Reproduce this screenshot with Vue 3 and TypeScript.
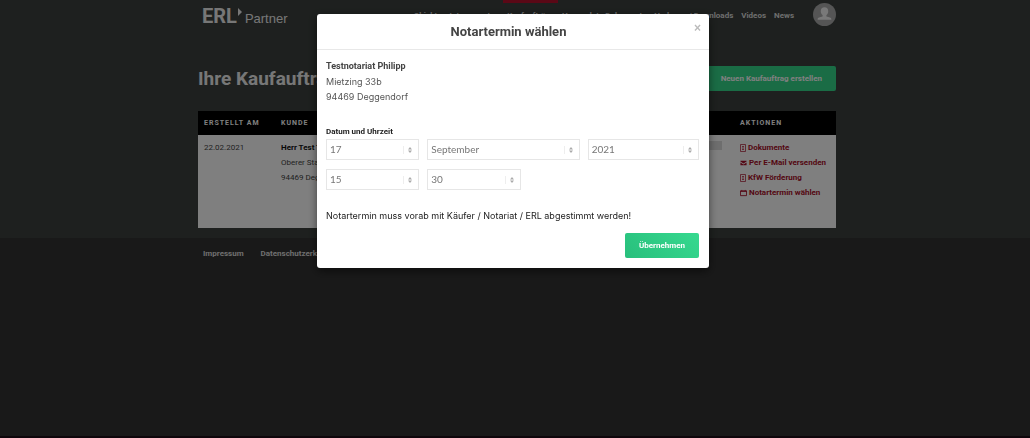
<script setup lang="ts">
import { reactive } from 'vue'

interface NavItem {
  label: string
  active?: boolean
}

interface Action {
  label: string
  icon: 'doc' | 'mail' | 'calendar'
}

const nav: NavItem[] = [
  { label: 'Objekte' },
  { label: 'Interessenten' },
  { label: 'Kaufaufträge', active: true },
  { label: 'Versendete Dokumente' },
  { label: 'Vorlagen / Downloads' },
  { label: 'Videos' },
  { label: 'News' },
]

const actions: Action[] = [
  { label: 'Dokumente', icon: 'doc' },
  { label: 'Per E-Mail versenden', icon: 'mail' },
  { label: 'KfW Förderung', icon: 'doc' },
  { label: 'Notartermin wählen', icon: 'calendar' },
]

const months: string[] = [
  'Januar', 'Februar', 'März', 'April', 'Mai', 'Juni', 'Juli',
  'August', 'September', 'Oktober', 'November', 'Dezember',
]

const range = (from: number, to: number): string[] =>
  Array.from({ length: to - from + 1 }, (_, i) => String(from + i).padStart(2, '0'))

const form = reactive({ day: '17', month: 'September', year: '2021', hour: '15', minute: '30' })

type Field = keyof typeof form

const dateFields: { key: Field; label: string; options: string[] }[] = [
  { key: 'day', label: 'Tag', options: range(1, 31) },
  { key: 'month', label: 'Monat', options: months },
  { key: 'year', label: 'Jahr', options: range(2021, 2025) },
]

const timeFields: { key: Field; label: string; options: string[] }[] = [
  { key: 'hour', label: 'Stunde', options: range(0, 23) },
  { key: 'minute', label: 'Minute', options: ['00', '15', '30', '45'] },
]
</script>

<template>
  <div class="page">
    <div class="upper">
      <header class="container topbar">
        <a href="#" class="logo">
          <span class="logo-main">ERL</span>
          <svg class="logo-mark" viewBox="0 0 4 8" aria-hidden="true"><path d="M0 0L4 4L0 8Z" /></svg>
          <span class="logo-sub">Partner</span>
        </a>
        <nav class="nav">
          <a v-for="item in nav" :key="item.label" href="#" :class="{ active: item.active }">{{ item.label }}</a>
        </nav>
        <button type="button" class="avatar" aria-label="Profil">
          <svg viewBox="0 0 24 24" aria-hidden="true">
            <path d="M12 4.500c-2.500 0-3.900 1.700-3.900 4.100 0 1.800.8 3.200 1.900 4v1.600c-2.800.5-5.200 1.200-5.200 2.600v.6h14.400v-.6c0-1.400-2.400-2.100-5.200-2.600v-1.600c1.100-.8 1.900-2.200 1.900-4C15.900 6.200 14.500 4.500 12 4.500z" />
          </svg>
        </button>
      </header>

      <main class="container">
        <div class="heading">
          <h1>Ihre Kaufaufträge</h1>
          <button type="button" class="btn btn-large">Neuen Kaufauftrag erstellen</button>
        </div>
        <table class="orders">
          <thead>
            <tr>
              <th class="col-date">Erstellt am</th>
              <th class="col-client">Kunde</th>
              <th class="col-state"></th>
              <th class="col-actions">Aktionen</th>
            </tr>
          </thead>
          <tbody>
            <tr>
              <td>22.02.2021</td>
              <td><strong>Herr Test Test</strong><br />Oberer Stadtplatz 1<br />94469 Deggendorf</td>
              <td><span class="bar"></span></td>
              <td>
                <a v-for="action in actions" :key="action.label" href="#" class="action">
                  <svg v-if="action.icon === 'doc'" class="icon-doc" viewBox="0 0 6 8" aria-hidden="true">
                    <path d="M.5.5h5v7h-5zM2 2.500h2M2 4h2M2 5.500h2" />
                  </svg>
                  <svg v-else-if="action.icon === 'mail'" class="icon-mail" viewBox="0 0 8 8" aria-hidden="true">
                    <path d="M.5 1.500h7v.8L4 4.500.5 2.300zM.5 3.400L4 5.600l3.500-2.200v3.100h-7z" />
                  </svg>
                  <svg v-else class="icon-calendar" viewBox="0 0 8 8" aria-hidden="true">
                    <path d="M.5 1.500h7v5.500h-7z" />
                    <path d="M.5 2.200h7M2 .5v1M6 .5v1" />
                  </svg>
                  <span>{{ action.label }}</span>
                </a>
              </td>
            </tr>
          </tbody>
        </table>
      </main>
    </div>

    <footer class="footer">
      <div class="container footer-links">
        <a href="#">Impressum</a>
        <a href="#">Datenschutzerklärung</a>
      </div>
    </footer>
  </div>

  <div class="overlay">
    <section class="modal" role="dialog" aria-modal="true" aria-labelledby="modal-title">
      <header class="modal-head">
        <h2 id="modal-title">Notartermin wählen</h2>
        <button type="button" class="close" aria-label="Schließen">×</button>
      </header>
      <form class="modal-body" @submit.prevent>
        <address>
          <strong>Testnotariat Philipp</strong><br />
          Mietzing 33b<br />
          94469 Deggendorf
        </address>
        <fieldset>
          <legend>Datum und Uhrzeit</legend>
          <div class="fields date">
            <div v-for="f in dateFields" :key="f.key" class="select">
              <select v-model="form[f.key]" :aria-label="f.label">
                <option v-for="o in f.options" :key="o">{{ o }}</option>
              </select>
              <svg viewBox="0 0 6 8" aria-hidden="true"><path d="M3 1L5 3.500H1zM3 7L1 4.500h4z" /></svg>
            </div>
          </div>
          <div class="fields time">
            <div v-for="f in timeFields" :key="f.key" class="select">
              <select v-model="form[f.key]" :aria-label="f.label">
                <option v-for="o in f.options" :key="o">{{ o }}</option>
              </select>
              <svg viewBox="0 0 6 8" aria-hidden="true"><path d="M3 1L5 3.500H1zM3 7L1 4.500h4z" /></svg>
            </div>
          </div>
        </fieldset>
        <p class="note">Notartermin muss vorab mit Käufer / Notariat / ERL abgestimmt werden!</p>
        <div class="modal-actions">
          <button type="submit" class="btn">Übernehmen</button>
        </div>
      </form>
    </section>
  </div>
</template>

<style>
body {
  margin: 0;
  background: #333;
}
</style>

<style scoped>
.page {
  box-sizing: border-box;
  display: flex;
  flex-direction: column;
  min-height: 100vh;
  padding-bottom: 2px;
  background: #1c0c16;
  color: #444;
  font: 8px/15px Roboto, "Liberation Sans", sans-serif;
}

a {
  color: inherit;
  text-decoration: none;
}

button {
  border: 0;
  font: inherit;
}

.container {
  box-sizing: border-box;
  width: calc(100% - 32px);
  max-width: 638px;
  margin: 0 auto;
}

.upper {
  padding: 0 0 10px 4px;
  background: #3c413e;
}

.topbar {
  display: flex;
  align-items: flex-start;
  height: 66px;
  padding-left: 4px;
  color: #fff;
}

.logo {
  display: flex;
  align-items: baseline;
  margin-top: 4px;
  color: #eee;
  line-height: 24px;
}

.logo-main {
  font-size: 20px;
  font-weight: 700;
}

.logo-mark {
  align-self: flex-start;
  width: 4px;
  height: 8px;
  margin: 4px 3px 0 1px;
  fill: #eee;
}

.logo-sub {
  font-family: "Liberation Sans", sans-serif;
  font-size: 13px;
}

.nav,
.btn,
.action,
.footer-links,
legend {
  font: 700 8px/15px Roboto, "Liberation Sans", sans-serif;
}

.nav {
  display: flex;
  margin-left: auto;
  white-space: nowrap;
}

.nav a {
  padding: 5px 4px 0;
  border-top: 3px solid transparent;
  color: #ddd;
}

.nav a.active {
  border-color: #b5102c;
}

.avatar {
  width: 23px;
  height: 23px;
  margin: 3px 0 0 15px;
  padding: 0;
  border-radius: 50%;
  background: #aaa;
}

.avatar svg {
  display: block;
  fill: #fff;
  opacity: 0.85;
}

.heading {
  display: flex;
  align-items: center;
  justify-content: space-between;
  margin-bottom: 20px;
}

h1 {
  margin: 0;
  color: #eee;
  font: 700 19px/22px Roboto, sans-serif;
}

.btn {
  padding: 5px 14px;
  border-radius: 2px;
  background: linear-gradient(45deg, #28bf7c, #36d98f);
  color: #fff;
}

.btn-large {
  background: #34d98b;
}

.orders {
  width: 100%;
  border-collapse: collapse;
  table-layout: fixed;
  background: #fff;
}

th {
  height: 24px;
  padding: 0 6px;
  background: #000;
  color: #fff;
  font-size: 7px;
  letter-spacing: 1px;
  text-align: left;
  text-transform: uppercase;
  white-space: nowrap;
}

.col-date {
  width: 65px;
}

.col-client {
  width: 330px;
}

.col-actions {
  width: 90px;
}

td {
  height: 88px;
  padding: 5px 6px 0;
  vertical-align: top;
}

td strong {
  color: #111;
}

.bar {
  display: block;
  height: 9px;
  margin: 1px 6px 0 0;
  background: #ddd;
}

.action {
  display: flex;
  align-items: center;
  gap: 2px;
  color: #a80f28;
  white-space: nowrap;
}

.action svg {
  flex: none;
  width: 7px;
  height: 8px;
  fill: none;
  stroke: currentColor;
}

.action .icon-doc {
  width: 6px;
  stroke-width: 0.7;
}

.action .icon-mail {
  fill: currentColor;
  stroke: none;
}

.footer {
  flex: 1;
  padding-left: 4px;
  background: #333;
}

.footer-links {
  display: flex;
  gap: 17px;
  padding: 8px 5px;
  color: #ddd;
}

.overlay {
  position: fixed;
  inset: 0;
  box-sizing: border-box;
  padding: 14px 4px 0 0;
  overflow: auto;
  background: rgba(0, 0, 0, 0.5);
  font: 9px/15px Inter, "Liberation Sans", sans-serif;
}

.modal {
  width: calc(100% - 32px);
  max-width: 392px;
  margin: 0 auto;
  border-radius: 3px;
  background: #fff;
  box-shadow: 0 3px 9px rgba(0, 0, 0, 0.5);
}

.modal-head {
  position: relative;
  padding: 9px 19px 9px 10px;
  border-bottom: 1px solid #e8e8e8;
}

h2 {
  margin: 0;
  color: #444;
  font: 700 13px/17px Roboto, sans-serif;
  text-align: center;
}

.close {
  position: absolute;
  top: 7px;
  right: 8px;
  padding: 0;
  background: none;
  color: #bbb;
  font: 700 12px/14px "Liberation Sans", sans-serif;
}

.modal-body {
  padding: 8px 10px 10px 9px;
}

address {
  color: #555;
  font-style: normal;
}

address strong {
  color: #444;
  font: 700 9px/15px Roboto, sans-serif;
}

fieldset {
  min-width: 0;
  margin: 20px 0 0;
  padding: 0;
  border: 0;
}

legend {
  padding: 0;
  color: #222;
}

.fields {
  display: grid;
  gap: 8px;
}

.date {
  grid-template-columns: 93fr 152fr 111fr;
}

.time {
  grid-template-columns: 93fr 93fr 170fr;
  margin-top: 9px;
}

.select {
  display: flex;
  align-items: center;
  height: 19px;
  border: 1px solid #e6e6e6;
}

select {
  flex: 1;
  align-self: stretch;
  min-width: 0;
  margin-right: -14px;
  padding: 0 18px 0 3px;
  border: 0;
  appearance: none;
  background: none;
  color: #777;
  font: 10px/15px Lato, sans-serif;
}

.select svg {
  width: 6px;
  height: 8px;
  padding: 0 5px 0 3px;
  border-left: 1px solid #eee;
  fill: #aaa;
  pointer-events: none;
}

.note {
  margin: 18px 0 10px;
  color: #222;
}

.modal-actions {
  display: flex;
  justify-content: flex-end;
}
</style>
